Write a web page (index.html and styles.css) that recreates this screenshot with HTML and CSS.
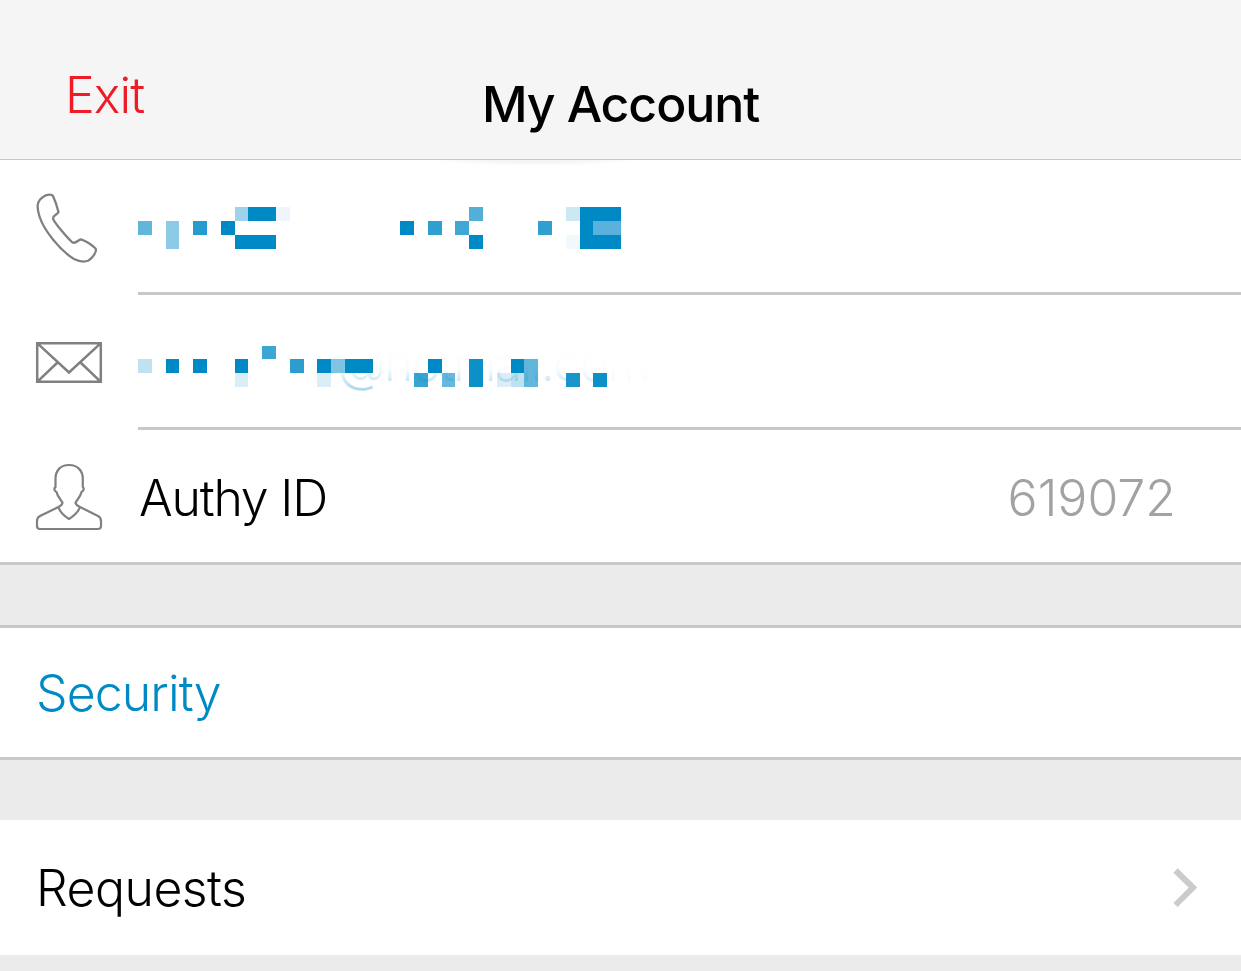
FILE: index.html
```html
<!DOCTYPE html>
<html lang="en">
<head>
<meta charset="utf-8">
<title>My Account</title>
<link rel="stylesheet" href="styles.css">
</head>
<body>
<header class="navbar">
  <a class="exit">Exit</a>
  <h1 class="title">My Account</h1>
  <span></span>
</header>
<main>
  <section class="group">
    <div class="row contact phone">
      <svg class="icon" viewBox="20 177.500 100 100" fill="none" stroke="#808080" stroke-width="2.3" stroke-linejoin="round"><path d="M45 195.200C48.500 194 51.500 193.500 53 195.500C55.500 201 57.500 207.500 58.500 211.500C58 214 53 214.500 53 218C54 222 68 238 72.500 242C76.500 243.500 78 239 81 238.800C86 240.500 92 244.500 95.500 248C97.500 251 92 258 88.500 260C84 262 78 260.500 74 258.500C60 250 44 230 39.500 216C37 208 35.500 200 45 195.200Z"/></svg>
      <div class="content">
        <svg class="mosaic" viewBox="138 160 540 132" fill="#008ac5" shape-rendering="crispEdges" role="img" aria-label="Hidden phone number">
          <rect x="138" y="221" width="14" height="14" opacity=".62"/>
          <rect x="166" y="221" width="13" height="28" opacity=".45"/>
          <rect x="193" y="221" width="14" height="14" opacity=".85"/>
          <rect x="221" y="221" width="14" height="14"/>
          <rect x="235" y="207" width="13" height="14" opacity=".38"/>
          <rect x="248" y="207" width="28" height="14"/>
          <rect x="276" y="207" width="14" height="14" fill="#eef5fd"/>
          <rect x="235" y="235" width="41" height="14"/>
          <rect x="400" y="221" width="14" height="14"/>
          <rect x="428" y="221" width="14" height="14" opacity=".82"/>
          <rect x="455" y="221" width="14" height="14" opacity=".75"/>
          <rect x="469" y="207" width="14" height="14" opacity=".68"/>
          <rect x="469" y="235" width="14" height="14"/>
          <rect x="538" y="221" width="14" height="14" opacity=".82"/>
          <rect x="566" y="207" width="14" height="14" opacity=".2"/>
          <rect x="566" y="235" width="14" height="14" opacity=".05"/>
          <rect x="580" y="207" width="41" height="42"/>
          <rect x="593" y="221" width="28" height="14" fill="#5bb1db"/>
        </svg>
      </div>
    </div>
    <div class="row contact">
      <svg class="icon" viewBox="20 313 100 100" fill="none" stroke="#808080" stroke-width="2.5"><path d="M37.200 343.200H100.800V381.800H37.200ZM37.200 343.200L69 372.500L100.800 343.200M37.200 381.800L57.500 362.500M100.800 381.800L80.500 362.500"/></svg>
      <div class="content">
        <svg class="mosaic" viewBox="138 295 540 132" fill="#008ac5" role="img" aria-label="Hidden email address">
          <defs>
            <linearGradient id="ghost" gradientUnits="userSpaceOnUse" x1="0" y1="345" x2="0" y2="390"><stop offset="0" stop-color="#008ac5" stop-opacity="0"/><stop offset=".55" stop-color="#008ac5" stop-opacity=".03"/><stop offset="1" stop-color="#008ac5" stop-opacity=".34"/></linearGradient>
            <linearGradient id="ghost-end" gradientUnits="userSpaceOnUse" x1="555" y1="0" x2="655" y2="0"><stop offset="0" stop-color="#fff" stop-opacity="0"/><stop offset=".6" stop-color="#fff" stop-opacity=".8"/><stop offset="1" stop-color="#fff" stop-opacity=".9"/></linearGradient>
          </defs>
          <text class="ghost" x="337" y="381" textLength="314" fill="url(#ghost)">@hotmail.com</text>
          <rect x="555" y="340" width="100" height="50" fill="url(#ghost-end)"/>
          <g shape-rendering="crispEdges">
            <rect x="138" y="359" width="14" height="14" opacity=".25"/>
            <rect x="166" y="359" width="13" height="14"/>
            <rect x="193" y="359" width="14" height="14"/>
            <rect x="235" y="359" width="13" height="14"/>
            <rect x="235" y="373" width="13" height="14" opacity=".15"/>
            <rect x="262" y="346" width="14" height="13" opacity=".76"/>
            <rect x="290" y="359" width="14" height="14" opacity=".83"/>
            <rect x="317" y="359" width="14" height="14"/>
            <rect x="317" y="373" width="14" height="14" opacity=".14"/>
            <rect x="331" y="359" width="14" height="14" opacity=".5"/>
            <rect x="345" y="359" width="28" height="14"/>
            <rect x="414" y="373" width="14" height="14" opacity=".78"/>
            <rect x="428" y="359" width="14" height="14"/>
            <rect x="442" y="373" width="13" height="14" opacity=".6"/>
            <rect x="469" y="359" width="14" height="28" opacity=".95"/>
            <rect x="497" y="373" width="14" height="14" opacity=".14"/>
            <rect x="511" y="359" width="13" height="14"/>
            <rect x="511" y="373" width="13" height="14" opacity=".25"/>
            <rect x="524" y="359" width="14" height="28" opacity=".62"/>
            <rect x="566" y="373" width="14" height="14" opacity=".9"/>
            <rect x="593" y="373" width="14" height="14" opacity=".95"/>
          </g>
        </svg>
      </div>
    </div>
    <div class="row last">
      <svg class="icon" viewBox="20 446 100 100" fill="none" stroke="#808080" stroke-width="2.200" stroke-linejoin="round"><path d="M55.500 487V479C55.500 470 61 465 69 465S82.800 470 82.800 479V487C84.500 488.500 83.500 491 81.500 492C80.500 497 77 500 75.500 502.500C75.500 505 78 506 80 507L98 516Q101 517.500 101 521V526Q101 529 98 529H40Q37 529 37 526V521Q37 517.500 40 516L58.500 507C60.500 506 62.500 505 62.500 502.500C61 500 57.500 497 56.500 492C54.500 491 53.500 488.500 55.500 487Z"/><path d="M58.500 507C60 513 65 516.500 69 519C73 516.500 78 513 80 507"/></svg>
      <span class="label authy">Authy ID</span>
      <span class="value">619072</span>
    </div>
  </section>
  <section class="group security"><span class="label">Security</span></section>
  <section class="group requests">
    <span class="label">Requests</span>
    <svg class="chevron" viewBox="0 0 24 40" fill="none" stroke="#cbcbcb" stroke-width="6"><path d="M2.500 2.500L20 19.500L2.500 37"/></svg>
  </section>
</main>
</body>
</html>
```
FILE: styles.css
```css
* { box-sizing: border-box; }
body {
  margin: 0;
  height: 971px;
  overflow: hidden;
  background: #ebebeb;
  color: #000;
  font: 300 50px/60px Inter, "Liberation Sans", sans-serif;
}
.navbar {
  height: 160px;
  background: #f5f5f5;
  border-bottom: 1px solid #c8c8c8;
  display: grid;
  grid-template-columns: 1fr auto 1fr;
  align-items: start;
}
.exit { padding: 65px 0 0 65px; color: #ee1c24; letter-spacing: -0.9px; }
.title { margin: 0; padding-top: 74px; font-size: 50px; font-weight: 500; letter-spacing: -1.1px; }
.group { background: #fff; }
.row { display: flex; align-items: center; }
.contact { height: 135px; }
.phone { background: radial-gradient(ellipse 105px 6px at 535px 0, #f5f5f5 40%, #fff 100%); }
.icon { width: 100px; height: 100px; flex: none; margin-left: 20px; }
.content {
  flex: 1;
  height: 135px;
  margin-left: 18px;
  border-bottom: 3px solid #c8c8c8;
}
.mosaic { display: block; width: 540px; height: 132px; }
.ghost { font-size: 50px; }
.last { height: 135px; border-bottom: 3px solid #c8c8c8; }
.label { white-space: nowrap; }
.authy { margin-left: 19px; padding-top: 4px; letter-spacing: -1.2px; }
.value { margin-left: auto; padding: 4px 65px 0 0; color: #a2a2a2; letter-spacing: 0; }
.security {
  height: 135px;
  margin: 60px 0;
  border: solid #c8c8c8;
  border-width: 3px 0;
  display: flex;
  align-items: center;
  padding-left: 36px;
  color: #008ac5;
  letter-spacing: -0.9px;
}
.requests {
  height: 135px;
  display: flex;
  align-items: center;
  justify-content: space-between;
  padding: 0 44px 0 36px;
  letter-spacing: -0.55px;
}
.chevron { width: 24px; height: 40px; }
```
